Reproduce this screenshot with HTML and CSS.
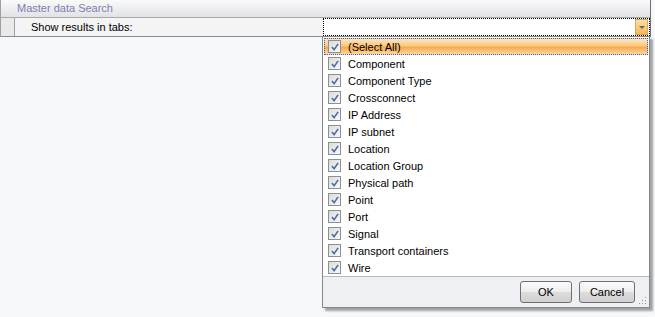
FILE: index.html
```html
<!DOCTYPE html>
<html lang="en">

<head>
    <meta charset="UTF-8">
    <title>Master data Search</title>
    <link rel="stylesheet" href="styles.css">
</head>

<body>
    <div class="grid">
        <div class="group-header">Master data Search</div>
        <div class="row">
            <div class="gutter"></div>
            <div class="label">Show results in tabs:</div>
            <div class="editor">
                <span class="drop-btn"><span class="arrow"></span></span>
            </div>
        </div>
    </div>

    <div class="popup">
        <ul class="check-list">
            <li class="selected"><span class="box"><svg viewBox="0 0 9 9"><path d="M1 4.5 L3.5 7.5 L8 1" /></svg></span>(Select All)</li>
            <li><span class="box"><svg viewBox="0 0 9 9"><path d="M1 4.5 L3.5 7.5 L8 1" /></svg></span>Component</li>
            <li><span class="box"><svg viewBox="0 0 9 9"><path d="M1 4.5 L3.5 7.5 L8 1" /></svg></span>Component Type</li>
            <li><span class="box"><svg viewBox="0 0 9 9"><path d="M1 4.5 L3.5 7.5 L8 1" /></svg></span>Crossconnect</li>
            <li><span class="box"><svg viewBox="0 0 9 9"><path d="M1 4.5 L3.5 7.5 L8 1" /></svg></span>IP Address</li>
            <li><span class="box"><svg viewBox="0 0 9 9"><path d="M1 4.5 L3.5 7.5 L8 1" /></svg></span>IP subnet</li>
            <li><span class="box"><svg viewBox="0 0 9 9"><path d="M1 4.5 L3.5 7.5 L8 1" /></svg></span>Location</li>
            <li><span class="box"><svg viewBox="0 0 9 9"><path d="M1 4.5 L3.5 7.5 L8 1" /></svg></span>Location Group</li>
            <li><span class="box"><svg viewBox="0 0 9 9"><path d="M1 4.5 L3.5 7.5 L8 1" /></svg></span>Physical path</li>
            <li><span class="box"><svg viewBox="0 0 9 9"><path d="M1 4.5 L3.5 7.5 L8 1" /></svg></span>Point</li>
            <li><span class="box"><svg viewBox="0 0 9 9"><path d="M1 4.5 L3.5 7.5 L8 1" /></svg></span>Port</li>
            <li><span class="box"><svg viewBox="0 0 9 9"><path d="M1 4.5 L3.5 7.5 L8 1" /></svg></span>Signal</li>
            <li><span class="box"><svg viewBox="0 0 9 9"><path d="M1 4.5 L3.5 7.5 L8 1" /></svg></span>Transport containers</li>
            <li><span class="box"><svg viewBox="0 0 9 9"><path d="M1 4.5 L3.5 7.5 L8 1" /></svg></span>Wire</li>
        </ul>
        <div class="popup-footer">
            <button class="btn btn-ok">OK</button>
            <button class="btn btn-cancel">Cancel</button>
            <svg class="grip" viewBox="0 0 9 9">
                <rect x="7" y="1" width="1" height="1" />
                <rect x="4" y="4" width="1" height="1" />
                <rect x="7" y="4" width="1" height="1" />
                <rect x="1" y="7" width="1" height="1" />
                <rect x="4" y="7" width="1" height="1" />
                <rect x="7" y="7" width="1" height="1" />
            </svg>
        </div>
    </div>
</body>

</html>
```

FILE: styles.css
```css
body {
    margin: 0;
    padding: 0;
    background-color: #f7f8f9;
    font-family: 'Liberation Sans', Arial, sans-serif;
    font-size: 11px;
    color: #000000;
    width: 655px;
    height: 317px;
    overflow: hidden;
    position: relative;
}
.grid {
    width: 649px;
    border-right: 1px solid #6f6f6f;
    border-left: 1px solid #a0a0a0;
}
.group-header {
    height: 17px;
    line-height: 17px;
    padding-left: 16px;
    color: #7b7fae;
    background-image: linear-gradient(#fafafb, #e1e2e5);
    border-bottom: 1px solid #a8a8a8;
}
.row {
    display: flex;
    height: 18px;
    border-bottom: 1px solid #8c8c8c;
}
.gutter {
    width: 13px;
    background-color: #eaeaeb;
    border-right: 1px solid #a0a0a0;
}
.label {
    width: 292px;
    padding-left: 16px;
    line-height: 18px;
    background-color: #f4f4f5;
}
.editor {
    flex: 1;
    display: flex;
    justify-content: flex-end;
    align-items: center;
    background-color: #ffffff;
    border: 1px dotted #000000;
    padding-right: 1px;
}
.drop-btn {
    width: 11px;
    height: 14px;
    display: flex;
    justify-content: center;
    align-items: center;
    border: 1px solid #d9a75c;
    background-image: linear-gradient(#fde0a6, #f8b64e);
}
.arrow {
    width: 0;
    height: 0;
    border-left: 3px solid transparent;
    border-right: 3px solid transparent;
    border-top: 3px solid #6a6a6a;
}
/* dropdown list */
.popup {
    position: absolute;
    left: 322px;
    top: 36px;
    width: 326px;
    height: 270px;
    border: 1px solid #868686;
    background-color: #ffffff;
    box-shadow: 3px 3px 2px rgba(0, 0, 0, 0.35);
    display: flex;
    flex-direction: column;
}
.check-list {
    list-style: none;
    margin: 0;
    padding: 1px 1px 0 1px;
    flex: 1;
}
.check-list li {
    height: 17px;
    display: flex;
    align-items: center;
    padding-left: 4px;
    box-sizing: border-box;
}
.check-list li.selected {
    border: 1px dotted #3a5fb0;
    padding-left: 3px;
    background-image: linear-gradient(#fde6c0, #fbc880 45%, #f7ab4c 55%, #fcd69a);
}
.box {
    width: 11px;
    height: 11px;
    border: 1px solid #8e8f8f;
    background-image: linear-gradient(135deg, #dcdcdc, #f8f8f8);
    margin-right: 7px;
    display: flex;
    justify-content: center;
    align-items: center;
}
.box svg {
    width: 8px;
    height: 8px;
}
.box path {
    fill: none;
    stroke: #4d6aa6;
    stroke-width: 1.8;
}
.popup-footer {
    height: 31px;
    border-top: 1px solid #b5b8bd;
    background-color: #eef0f3;
    display: flex;
    justify-content: flex-end;
    align-items: center;
    padding-right: 14px;
    gap: 7px;
    position: relative;
}
.btn {
    font-family: 'Liberation Sans', Arial, sans-serif;
    font-size: 11px;
    height: 22px;
    border: 1px solid #707070;
    border-radius: 3px;
    background-image: linear-gradient(#fbfbfb, #ececec 50%, #dddddd 51%, #cfcfcf);
    color: #000000;
    padding: 0;
}
.btn-ok {
    width: 52px;
}
.btn-cancel {
    width: 56px;
}
.grip {
    position: absolute;
    right: 2px;
    bottom: 2px;
    width: 9px;
    height: 9px;
    fill: #9a9a9a;
}
```
